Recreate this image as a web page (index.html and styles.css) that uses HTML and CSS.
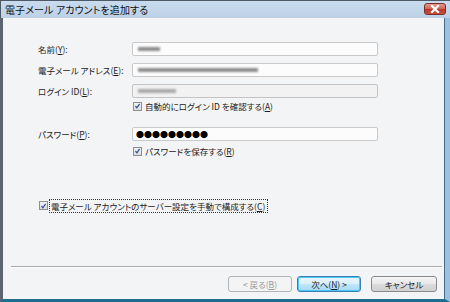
FILE: index.html
```html
<!DOCTYPE html>
<html lang="ja">
<head>
<meta charset="utf-8">
<link rel="stylesheet" href="styles.css">
</head>
<body>
<div class="window">
  <div class="titlebar">
    <span class="title">電子メール アカウントを追加する</span>
    <span class="close">
      <svg width="12" height="8" viewBox="0 0 12 8"><path d="M3 1 L9 7 M9 1 L3 7" stroke="#fff" stroke-width="2.2" stroke-linecap="square"/></svg>
    </span>
  </div>
  <div class="client">
    <div class="form">
      <div class="row">
        <label class="label">名前(<u>Y</u>):</label>
        <div class="input"><span class="blob" style="width:22px"></span></div>
      </div>
      <div class="row">
        <label class="label">電子メール アドレス(<u>E</u>):</label>
        <div class="input"><span class="blob" style="width:120px"></span></div>
      </div>
      <div class="row">
        <label class="label">ログイン ID(<u>L</u>):</label>
        <div class="input disabled"><span class="blob light" style="width:38px"></span></div>
      </div>
      <div class="row check-row first-check">
        <span class="spacer"></span>
        <span class="check"><span class="box"><svg width="8" height="8" viewBox="0 0 8 8"><path d="M1.6 4.2 L3.3 6 L6.4 1.6" stroke="#2b4fa0" stroke-width="1.4" fill="none"/></svg></span>自動的にログイン ID を確認する(<u>A</u>)</span>
      </div>
      <div class="row pw-row">
        <label class="label">パスワード(<u>P</u>):</label>
        <div class="input pw">●●●●●●●●●</div>
      </div>
      <div class="row check-row second-check">
        <span class="spacer"></span>
        <span class="check"><span class="box"><svg width="8" height="8" viewBox="0 0 8 8"><path d="M1.6 4.2 L3.3 6 L6.4 1.6" stroke="#2b4fa0" stroke-width="1.4" fill="none"/></svg></span>パスワードを保存する(<u>R</u>)</span>
      </div>
      <div class="manual">
        <span class="box"><svg width="8" height="8" viewBox="0 0 8 8"><path d="M1.6 4.2 L3.3 6 L6.4 1.6" stroke="#2b4fa0" stroke-width="1.4" fill="none"/></svg></span><span class="focus">電子メール アカウントのサーバー設定を手動で構成する(<u>C</u>)</span>
      </div>
    </div>
    <div class="sep"></div>
    <div class="buttons">
      <button class="btn disabled-btn">&lt; 戻る(<u>B</u>)</button>
      <button class="btn default-btn">次へ(<u>N</u>) &gt;</button>
      <button class="btn cancel">キャンセル</button>
    </div>
  </div>
</div>
</body>
</html>
```
FILE: styles.css
```css
* { box-sizing: border-box; }
html, body { margin: 0; padding: 0; }
body {
  width: 450px;
  height: 302px;
  overflow: hidden;
  font-family: "Noto Sans CJK JP", "Noto Sans", sans-serif;
  font-feature-settings: "palt";
  font-size: 8.5px;
  color: #1b1b1b;
  background: #8fb4d6;
}
u { text-decoration: underline; text-underline-offset: 1px; }
.window {
  width: 450px;
  height: 302px;
  display: flex;
  flex-direction: column;
  border-top: 1px solid #4d5a66;
}
.titlebar {
  height: 17px;
  display: flex;
  align-items: center;
  justify-content: space-between;
  padding: 0 4px 0 4px;
  background: linear-gradient(#c9dbee, #bcd1e7);
  border-left: 1px solid #4d5a66;
}
.title {
  font-size: 10px;
  color: #111;
  letter-spacing: 0.1px;
}
.close {
  width: 22px;
  height: 12px;
  margin-top: -1px;
  border: 1px solid #7a2f2a;
  border-radius: 3px;
  background: linear-gradient(#e49a8e 0%, #d0685a 45%, #b8392c 55%, #c6523f 100%);
  display: flex;
  align-items: center;
  justify-content: center;
}
.client {
  flex: 1;
  display: flex;
  flex-direction: column;
  background: #f3f4f6;
  border-left: 3px solid #5d6670;
  border-right: 5px solid #9cc1e0;
  border-bottom: 3px solid #1f6d8a;
  box-shadow: inset -1px 0 0 #3f6f8c;
}
.form {
  flex: 1;
  padding: 24px 0 0 35px;
  display: flex;
  flex-direction: column;
}
.row {
  display: flex;
  align-items: center;
  height: 14px;
  margin-bottom: 7px;
}
.label {
  width: 94px;
  flex: none;
}
.spacer { width: 95px; flex: none; }
.input {
  width: 246px;
  height: 14px;
  background: #fcfcfc;
  border: 1px solid #c9c9c9;
  border-radius: 2px;
  display: flex;
  align-items: center;
  padding-left: 5px;
}
.input.disabled {
  background: #f2f2f2;
  border-color: #c4c4c4;
}
.blob {
  display: inline-block;
  height: 4px;
  background: #8c8c8c;
  filter: blur(1.3px);
}
.blob.light { background: #a9a9a9; }
.pw {
  font-size: 8px;
  color: #000;
  padding-left: 3px;
  letter-spacing: 0;
  font-feature-settings: normal;
}
.check-row { height: 12px; }
.first-check { margin-top: -5px; margin-bottom: 0; }
.pw-row { margin-top: 15px; margin-bottom: 4px; }
.second-check { margin-bottom: 0; }
.check { display: flex; align-items: center; white-space: nowrap; }
.box {
  width: 9px;
  height: 9px;
  margin-right: 3px;
  border: 1px solid #8e8f8f;
  background: linear-gradient(#f2f2f2, #dcdcdc);
  display: inline-flex;
  align-items: center;
  justify-content: center;
  flex: none;
}
.box svg { display: block; }
.manual {
  margin-top: 42px;
  margin-left: 1px;
  display: flex;
  align-items: center;
  height: 13px;
  white-space: nowrap;
}
.manual .box { margin-right: 2px; }
.focus {
  display: inline-block;
  outline: 1px dotted #333;
  outline-offset: 0;
  padding: 0 2px 0 1px;
  line-height: 12px;
}
.sep {
  height: 2px;
  margin: 2px 3px 0 8px;
  border-top: 1px solid #a9a9a9;
  border-bottom: 1px solid #fff;
}
.buttons {
  display: flex;
  justify-content: flex-end;
  padding: 8px 8px 7px 0;
  gap: 5px;
}
.btn {
  width: 64px;
  height: 16px;
  padding: 0;
  font-family: inherit;
  font-feature-settings: "palt";
  font-size: 8.5px;
  color: #1b1b1b;
  border: 1px solid #8a8a8a;
  border-radius: 3px;
  background: linear-gradient(#f6f6f6 0%, #e8e8e8 48%, #dcdcdc 52%, #d0d0d0 100%);
  line-height: 14px;
}
.disabled-btn {
  color: #9a9a9a;
  border-color: #b0b5b9;
  background: #f4f4f4;
}
.default-btn {
  border-color: #3c7fb1;
  background: linear-gradient(#eaf6fd 0%, #d9f0fc 48%, #bee6fd 52%, #a7d9f5 100%);
  box-shadow: inset 0 0 0 1px #48c8f8;
}
.cancel {
  width: 66px;
  margin-left: 5px;
}
```
